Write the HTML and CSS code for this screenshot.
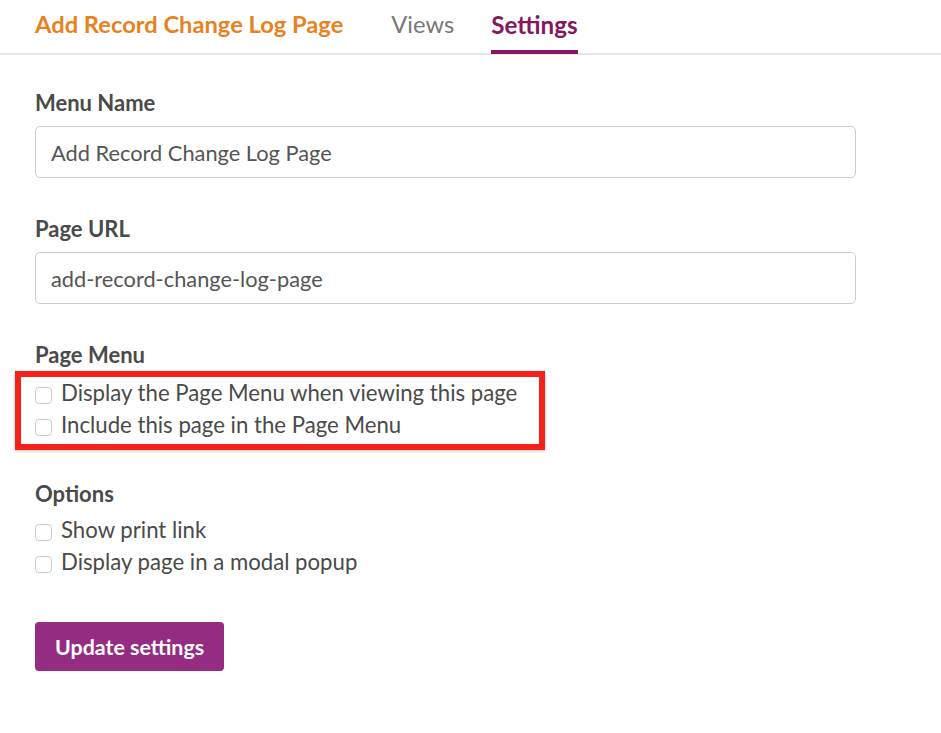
FILE: index.html
```html
<!DOCTYPE html>
<html lang="en">
<head>
    <meta charset="UTF-8">
    <meta name="viewport" content="width=device-width, initial-scale=1.0">
    <title>Add Record Change Log Page - Settings</title>
    <link rel="stylesheet" href="styles.css">
</head>
<body>
    <nav class="tabs">
        <span class="tab tab-title">Add Record Change Log Page</span>
        <a class="tab tab-link" href="#">Views</a>
        <a class="tab tab-link active" href="#">Settings</a>
    </nav>

    <main>
        <form class="settings-form">
            <div class="form-group">
                <label class="field-label" for="menuName">Menu Name</label>
                <input type="text" id="menuName" value="Add Record Change Log Page">
            </div>

            <div class="form-group">
                <label class="field-label" for="pageUrl">Page URL</label>
                <input type="text" id="pageUrl" value="add-record-change-log-page">
            </div>

            <div class="form-group page-menu">
                <span class="group-title">Page Menu</span>
                <div class="highlight">
                    <label class="check"><input type="checkbox"><span class="box"></span>Display the Page Menu when viewing this page</label>
                    <label class="check"><input type="checkbox"><span class="box"></span>Include this page in the Page Menu</label>
                </div>
            </div>

            <div class="form-group options">
                <span class="group-title">Options</span>
                <label class="check"><input type="checkbox"><span class="box"></span>Show print link</label>
                <label class="check"><input type="checkbox"><span class="box"></span>Display page in a modal popup</label>
            </div>

            <button type="submit">Update settings</button>
        </form>
    </main>
</body>
</html>
```
FILE: styles.css
```css
body {
    margin: 0;
    font-family: Lato, "Open Sans", sans-serif;
    color: #4a4a4a;
    background-color: #fff;
}

.tabs {
    display: flex;
    align-items: flex-end;
    height: 53px;
    padding: 0 35px;
    border-bottom: 2px solid #e6e6ea;
}

.tab {
    font-size: 23.7px;
    line-height: 29px;
    padding-bottom: 11px;
    border-bottom: 4px solid transparent;
    margin-bottom: -1px;
    text-decoration: none;
}

.tab-title {
    color: #e8821e;
    font-weight: bold;
    margin-right: 48px;
}

.tab-link {
    color: #777;
    margin-right: 37px;
}

.tab-link.active {
    color: #85175f;
    font-size: 24.2px;
    font-weight: bold;
    border-bottom-color: #85175f;
}

.settings-form {
    padding: 34px 35px 0;
    width: 821px;
}

.form-group {
    margin-bottom: 37px;
}

.field-label,
.group-title {
    display: block;
    font-size: 22px;
    font-weight: bold;
    line-height: 28px;
    margin-bottom: 9px;
}

.form-group input[type="text"] {
    display: block;
    width: 100%;
    height: 52px;
    padding: 0 15px;
    border: 1px solid #ccc;
    border-radius: 5px;
    box-sizing: border-box;
    font-family: inherit;
    font-size: 21.8px;
    color: #555;
}

.page-menu {
    margin-bottom: 30px;
}

.page-menu .group-title {
    margin-bottom: 2px;
}

.highlight {
    margin: 0 -20px;
    padding: 1px 14px 2px;
    border: 6px solid #f5221b;
    width: 490px;
    box-shadow: 0 1px 3px rgba(0, 0, 0, 0.25);
}

.check {
    display: flex;
    align-items: center;
    height: 32px;
    font-size: 22.2px;
    line-height: 28px;
    padding-bottom: 2px;
    box-sizing: border-box;
    color: #4a4a4a;
}

.check input {
    display: none;
}

.check .box {
    width: 17px;
    height: 17px;
    border: 1px solid #ccc;
    border-radius: 4px;
    box-sizing: border-box;
    margin-right: 9px;
    margin-top: 4px;
    flex-shrink: 0;
}

.options {
    margin-bottom: 43px;
}

.options .group-title {
    margin-bottom: 7px;
}

.settings-form button[type="submit"] {
    background-color: #962b82;
    color: #fff;
    border: none;
    border-radius: 4px;
    height: 49px;
    padding: 0 20px;
    font-family: inherit;
    font-size: 21.4px;
    font-weight: bold;
    cursor: pointer;
}
```
